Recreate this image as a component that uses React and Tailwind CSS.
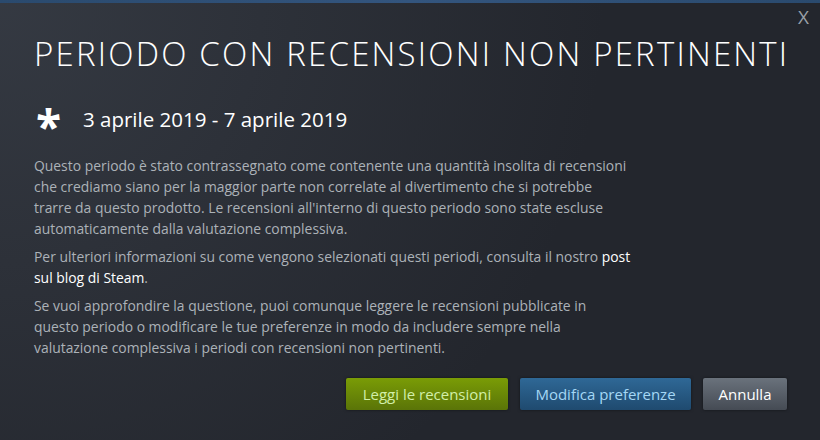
export default function App() {
  return (
    <div
      className="relative w-[820px] h-[440px] overflow-hidden bg-[#23262d] text-[#acb2b8]"
      style={{ fontFamily: '"Open Sans", "Noto Sans", sans-serif' }}
    >
      <div className="absolute inset-0 bg-[radial-gradient(circle_at_top_left,rgba(74,81,92,0.45)_0%,rgba(75,81,92,0)_65%)]" />
      <div className="absolute top-0 left-0 right-0 h-[3px] bg-[linear-gradient(90deg,#2a4a6e,#33557e,#2a4a6e)]" />
      <button className="absolute top-[8px] right-[11px] text-[#9aa0a8] text-[19px] leading-none">X</button>

      <div className="relative px-[34px] pt-[34px]">
        <h1 className="text-white text-[33px] leading-[40px] font-light tracking-[2.2px] uppercase whitespace-nowrap">
          Periodo con recensioni non pertinenti
        </h1>

        <div className="flex items-center mt-[28px] h-[34px]">
          <span className="text-white text-[46px] font-bold leading-none w-[49px] pl-[2px] mt-[14px]">*</span>
          <span className="text-white text-[20.5px]">3 aprile 2019 - 7 aprile 2019</span>
        </div>

        <div className="mt-[19px] text-[13.9px] leading-[21px] space-y-[7px] whitespace-nowrap">
          <p>
            Questo periodo è stato contrassegnato come contenente una quantità insolita di recensioni
            <br />
            che crediamo siano per la maggior parte non correlate al divertimento che si potrebbe
            <br />
            trarre da questo prodotto. Le recensioni all'interno di questo periodo sono state escluse
            <br />
            automaticamente dalla valutazione complessiva.
          </p>
          <p>
            Per ulteriori informazioni su come vengono selezionati questi periodi, consulta il nostro{" "}
            <span className="text-white">post</span>
            <br />
            <span className="text-white">sul blog di Steam</span>.
          </p>
          <p>
            Se vuoi approfondire la questione, puoi comunque leggere le recensioni pubblicate in
            <br />
            questo periodo o modificare le tue preferenze in modo da includere sempre nella
            <br />
            valutazione complessiva i periodi con recensioni non pertinenti.
          </p>
        </div>

        <div className="flex justify-end gap-[12px] mt-[20px] mr-[-1px]">
          <button className="h-[32px] w-[162px] rounded-[2px] bg-[linear-gradient(180deg,#7a9c06,#5a7408)] text-[#d2efa9] text-[15px] shadow-[0_0_3px_rgba(0,0,0,0.5)]">
            Leggi le recensioni
          </button>
          <button className="h-[32px] w-[171px] rounded-[2px] bg-[linear-gradient(180deg,#2f6896,#1f4a6f)] text-[#a4d7f5] text-[15px] shadow-[0_0_3px_rgba(0,0,0,0.5)]">
            Modifica preferenze
          </button>
          <button className="h-[32px] w-[84px] rounded-[2px] bg-[linear-gradient(180deg,#6a727c,#454b54)] text-white text-[15px] shadow-[0_0_3px_rgba(0,0,0,0.5)]">
            Annulla
          </button>
        </div>
      </div>
    </div>
  );
}
